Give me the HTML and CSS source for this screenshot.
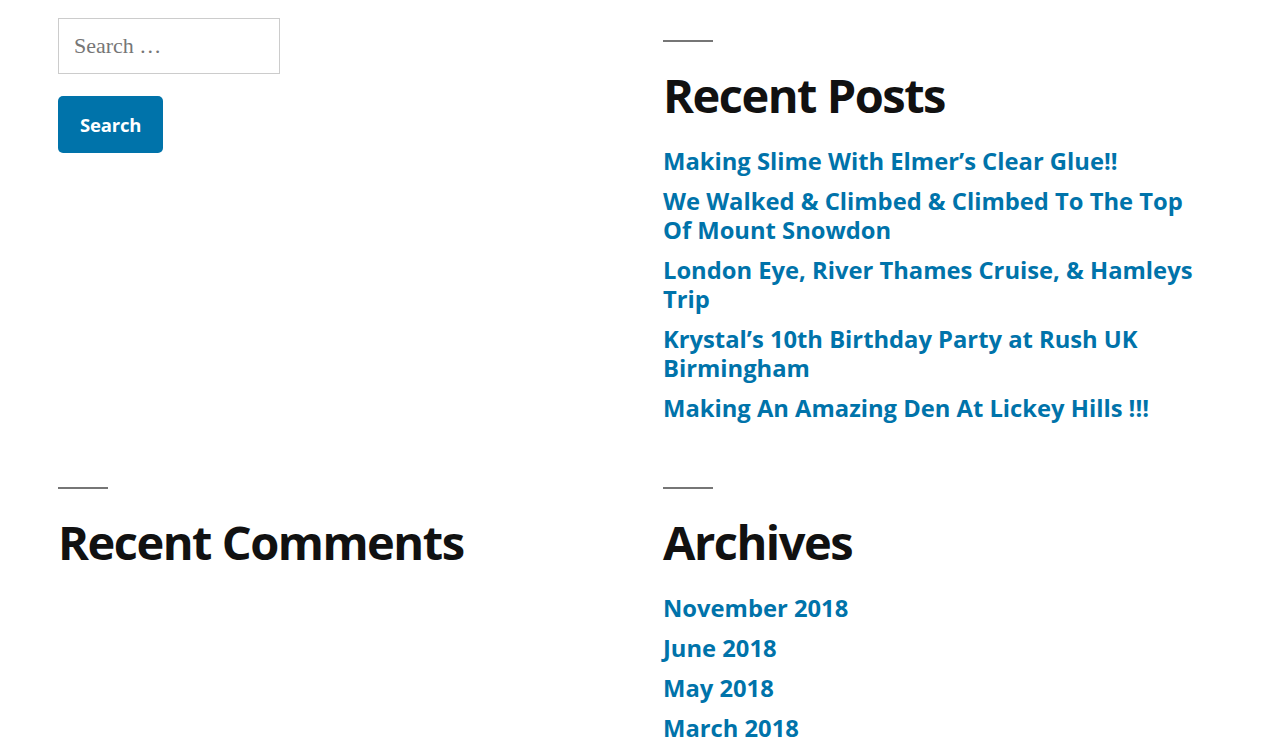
FILE: index.html
```html
<!DOCTYPE html>
<html lang="en">
<head>
<meta charset="utf-8">
<title>Widgets</title>
<link rel="stylesheet" href="styles.css">
</head>
<body>
<aside class="widget-area">
  <section class="widget widget-search">
    <form class="search-form">
      <input class="search-field" type="search" placeholder="Search …">
      <button class="search-submit" type="button">Search</button>
    </form>
  </section>

  <section class="widget">
    <h2 class="widget-title">Recent Posts</h2>
    <ul class="widget-list">
      <li><a href="#">Making Slime With Elmer’s Clear Glue!!</a></li>
      <li><a href="#">We Walked &amp; Climbed &amp; Climbed To The Top Of Mount Snowdon</a></li>
      <li><a href="#">London Eye, River Thames Cruise, &amp; Hamleys Trip</a></li>
      <li><a href="#">Krystal’s 10th Birthday Party at Rush UK Birmingham</a></li>
      <li><a href="#">Making An Amazing Den At Lickey Hills !!!</a></li>
    </ul>
  </section>

  <section class="widget">
    <h2 class="widget-title">Recent Comments</h2>
  </section>

  <section class="widget">
    <h2 class="widget-title">Archives</h2>
    <ul class="widget-list">
      <li><a href="#">November 2018</a></li>
      <li><a href="#">June 2018</a></li>
      <li><a href="#">May 2018</a></li>
      <li><a href="#">March 2018</a></li>
    </ul>
  </section>
</aside>
</body>
</html>
```

FILE: styles.css
```css
html, body {
  margin: 0;
  padding: 0;
  background: #fff;
}

body {
  font-family: "Open Sans", "Noto Sans", sans-serif;
  color: #111;
  height: 751px;
  overflow: hidden;
}

.widget-area {
  display: grid;
  grid-template-columns: 547px 547px;
  column-gap: 58px;
  row-gap: 41.5px;
  padding: 18px 58px 0;
  align-items: start;
}

.widget {
  margin: 0;
}

/* search form */
.search-form {
  display: flex;
  flex-direction: column;
  align-items: flex-start;
  gap: 22px;
}

.search-field {
  box-sizing: border-box;
  width: 222px;
  height: 56px;
  margin: 0;
  padding: 0 15px;
  border: 1px solid #ccc;
  border-radius: 0;
  font-family: "Liberation Serif", "Times New Roman", serif;
  font-size: 22px;
  color: #111;
  background: #fff;
  outline: none;
}

.search-field::placeholder {
  color: #767676;
  opacity: 1;
}

.search-submit {
  box-sizing: border-box;
  height: 57px;
  margin: 0;
  padding: 0 22px;
  border: 0;
  border-radius: 5px;
  background: #0073aa;
  color: #fff;
  font-family: "Open Sans", "Noto Sans", sans-serif;
  font-weight: 700;
  font-size: 18.5px;
  letter-spacing: -0.2px;
  line-height: 23px;
  cursor: pointer;
}

/* widget headings with the short rule above */
.widget-title {
  margin: 0 0 22px;
  font-size: 47px;
  font-weight: 700;
  letter-spacing: -1.5px;
  line-height: 59.4px;
  color: #111;
}

.widget-title::before {
  content: "";
  display: block;
  width: 50px;
  height: 2px;
  margin: 22px 0 24px;
  background: #767676;
}

/* link lists */
.widget-list {
  list-style: none;
  margin: 0;
  padding: 0;
}

.widget-list li {
  font-size: 23.75px;
  font-weight: 700;
  line-height: 29px;
}

.widget-list li + li {
  margin-top: 11px;
}

.widget-list a {
  color: #0073aa;
  text-decoration: none;
}
```
